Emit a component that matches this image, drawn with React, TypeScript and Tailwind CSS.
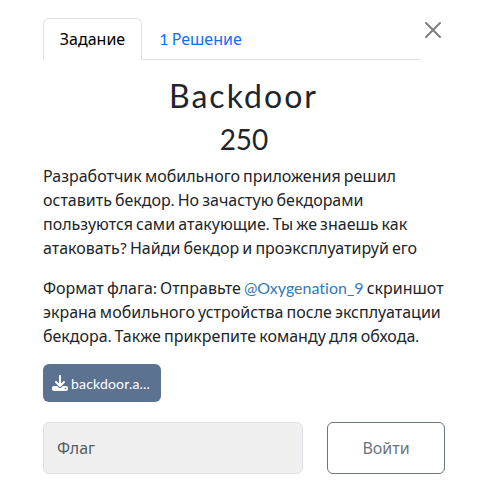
import React from "react";

// Cyrillic words use Noto Sans; Latin letters, digits, spaces and punctuation stay in Lato.
function Mixed({ children }: { children: string }) {
  return (
    <>
      {children.split(/([\u0400-\u04FF]+)/).map((part, i) =>
        i % 2 ? <span key={i} className="font-['Noto_Sans',sans-serif] leading-none">{part}</span> : part
      )}
    </>
  );
}

export default function App() {
  return (
    <main className="h-[494px] w-[487px] overflow-hidden bg-white pl-[43px] pt-[18px] font-['Lato','Noto_Sans',sans-serif] text-base leading-6 text-[#212529] [font-variant-ligatures:no-common-ligatures]">
      <header className="flex w-[402px] items-start justify-between">
        <nav className="flex w-[378px] border-b border-[#dee2e6]">
          <button className="-mb-px h-[42px] w-[99px] rounded-t-md border border-[#dee2e6] border-b-white bg-white text-black"><Mixed>Задание</Mixed></button>
          <button className="h-[41px] w-[117px] text-[#0d6efd] [word-spacing:-1px]"><Mixed>1 Решение</Mixed></button>
        </nav>
        <button aria-label="Закрыть" className="mr-1 mt-1">
          <svg className="h-4 w-4" viewBox="0 0 16 16" fill="#7f7f7f">
            <path d="M.293.293a1 1 0 0 1 1.414 0L8 6.586 14.293.293a1 1 0 1 1 1.414 1.414L9.414 8l6.293 6.293a1 1 0 0 1-1.414 1.414L8 9.414l-6.293 6.293a1 1 0 0 1-1.414-1.414L6.586 8 .293 1.707a1 1 0 0 1 0-1.414z" />
          </svg>
        </button>
      </header>
      <h2 className="mt-[15px] w-[401px] text-center text-[32px] leading-[42px] tracking-[2px]">Backdoor</h2>
      <h3 className="mt-[5px] w-[402px] text-center text-[28px] leading-[34px]">250</h3>
      <div className="mt-2 whitespace-nowrap [word-spacing:-1px]">
        <p>
          <Mixed>Разработчик мобильного приложения решил</Mixed><br />
          <Mixed>оставить бекдор. Но зачастую бекдорами</Mixed><br />
          <Mixed>пользуются сами атакующие. Ты же знаешь как</Mixed><br />
          <Mixed>атаковать? Найди бекдор и проэксплуатируй его</Mixed>
        </p>
        <p className="mt-4">
          <Mixed>Формат флага: Отправьте </Mixed><a className="text-[#337ab7]">@Oxygenation_9</a><Mixed> скриншот</Mixed><br />
          <Mixed>экрана мобильного устройства после эксплуатации</Mixed><br />
          <Mixed>бекдора. Также прикрепите команду для обхода.</Mixed>
        </p>
      </div>
      <button className="mt-4 flex h-[38px] w-[118px] items-center gap-[3px] rounded-md bg-[#5b7290] pl-[9px] text-sm text-white">
        <svg className="h-4 w-4" viewBox="0 0 512 512" fill="currentColor">
          <path d="M288 32c0-17.7-14.3-32-32-32s-32 14.3-32 32v242.700l-73.400-73.400c-12.500-12.500-32.800-12.500-45.300 0s-12.500 32.800 0 45.300l128 128c12.500 12.500 32.800 12.500 45.300 0l128-128c12.500-12.500 12.500-32.800 0-45.300s-32.800-12.500-45.300 0L288 274.700V32zM64 352c-35.300 0-64 28.700-64 64v32c0 35.300 28.700 64 64 64h384c35.300 0 64-28.700 64-64v-32c0-35.300-28.700-64-64-64H346.500l-45.300 45.300c-25 25-65.500 25-90.500 0L165.500 352H64zm368 56a24 24 0 1 1 0 48 24 24 0 1 1 0-48z" />
        </svg>
        <small className="mt-0.5 text-sm tracking-[0.18px]">backdoor.a...</small>
      </button>
      <form className="mt-5 flex gap-6">
        <input aria-label="Флаг" placeholder="Флаг" className="h-[52px] w-[260px] rounded-md border border-[#dee2e6] bg-[#efefef] px-[13px] font-['Noto_Sans',sans-serif] placeholder:text-[#595c5f] placeholder:opacity-100" />
        <button type="button" className="h-[52px] w-[118px] rounded-md border border-[#6c757d] text-[#6c757d]"><Mixed>Войти</Mixed></button>
      </form>
    </main>
  );
}
